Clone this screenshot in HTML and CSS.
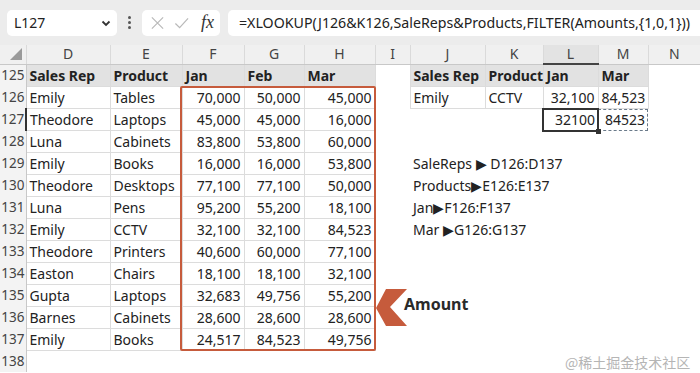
FILE: index.html
```html
<!DOCTYPE html>
<html lang="en">
<head>
  <meta charset="UTF-8">
  <title>XLOOKUP with FILTER</title>
  <link rel="stylesheet" href="styles.css">
</head>
<body>
  <div class="toolbar">
    <div class="namebox">
      <span>L127</span>
      <svg class="caret" width="10" height="7" viewBox="0 0 10 7"><path d="M1.5 1.5 L5 5 L8.5 1.5" fill="none" stroke="#333" stroke-width="1.8"/></svg>
    </div>
    <div class="dots"><i></i><i></i><i></i></div>
    <div class="fxbox">
      <svg width="16" height="16" viewBox="0 0 16 16"><path d="M2 2 L14 14 M14 2 L2 14" stroke="#b9b9b9" stroke-width="1.3"/></svg>
      <svg width="16" height="16" viewBox="0 0 16 16"><path d="M1.5 8.5 L6 13 L15 3" fill="none" stroke="#b9b9b9" stroke-width="1.3"/></svg>
      <span class="fx">fx</span>
    </div>
    <div class="formula">=XLOOKUP(J126&amp;K126,SaleReps&amp;Products,FILTER(Amounts,{1,0,1}))</div>
  </div>

  <div class="sheet">
    <table class="grid">
      <colgroup>
        <col style="width:26px"><col style="width:84px"><col style="width:72px"><col style="width:62px">
        <col style="width:60px"><col style="width:71px"><col style="width:35px"><col style="width:75px">
        <col style="width:58px"><col style="width:55px"><col style="width:50px"><col style="width:52px">
      </colgroup>
      <tr class="colhead">
        <td class="corner"><svg width="12" height="12" viewBox="0 0 12 12"><path d="M12 0 L12 12 L0 12 Z" fill="#9a9a9a"/></svg></td>
        <td>D</td><td>E</td><td>F</td><td>G</td><td>H</td><td>I</td><td>J</td><td>K</td><td class="active">L</td><td>M</td><td>N</td>
      </tr>
      <tr>
        <td class="rn">125</td>
        <td class="b th">Sales Rep</td><td class="b th">Product</td><td class="b th">Jan</td><td class="b th">Feb</td><td class="b th">Mar</td>
        <td></td>
        <td class="b th">Sales Rep</td><td class="b th">Product</td><td class="b th">Jan</td><td class="b th">Mar</td><td></td>
      </tr>
      <tr>
        <td class="rn">126</td>
        <td class="b">Emily</td><td class="b">Tables</td><td class="b n">70,000</td><td class="b n">50,000</td><td class="b n">45,000</td>
        <td></td>
        <td class="b">Emily</td><td class="b">CCTV</td><td class="b n">32,100</td><td class="b n">84,523</td><td></td>
      </tr>
      <tr>
        <td class="rn sel">127</td>
        <td class="b">Theodore</td><td class="b">Laptops</td><td class="b n">45,000</td><td class="b n">45,000</td><td class="b n">16,000</td>
        <td></td><td></td><td></td>
        <td class="n cur">32100<span class="handle"></span></td><td class="n spill">84523</td><td></td>
      </tr>
      <tr>
        <td class="rn">128</td>
        <td class="b">Luna</td><td class="b">Cabinets</td><td class="b n">83,800</td><td class="b n">53,800</td><td class="b n">60,000</td>
        <td></td><td></td><td></td><td></td><td></td><td></td>
      </tr>
      <tr>
        <td class="rn">129</td>
        <td class="b">Emily</td><td class="b">Books</td><td class="b n">16,000</td><td class="b n">16,000</td><td class="b n">53,800</td>
        <td></td><td class="note">SaleReps ▶ D126:D137</td><td></td><td></td><td></td><td></td>
      </tr>
      <tr>
        <td class="rn">130</td>
        <td class="b">Theodore</td><td class="b">Desktops</td><td class="b n">77,100</td><td class="b n">77,100</td><td class="b n">50,000</td>
        <td></td><td class="note">Products▶E126:E137</td><td></td><td></td><td></td><td></td>
      </tr>
      <tr>
        <td class="rn">131</td>
        <td class="b">Luna</td><td class="b">Pens</td><td class="b n">95,200</td><td class="b n">55,200</td><td class="b n">18,100</td>
        <td></td><td class="note">Jan▶F126:F137</td><td></td><td></td><td></td><td></td>
      </tr>
      <tr>
        <td class="rn">132</td>
        <td class="b">Emily</td><td class="b">CCTV</td><td class="b n">32,100</td><td class="b n">32,100</td><td class="b n">84,523</td>
        <td></td><td class="note">Mar ▶G126:G137</td><td></td><td></td><td></td><td></td>
      </tr>
      <tr>
        <td class="rn">133</td>
        <td class="b">Theodore</td><td class="b">Printers</td><td class="b n">40,600</td><td class="b n">60,000</td><td class="b n">77,100</td>
        <td></td><td></td><td></td><td></td><td></td><td></td>
      </tr>
      <tr>
        <td class="rn">134</td>
        <td class="b">Easton</td><td class="b">Chairs</td><td class="b n">18,100</td><td class="b n">18,100</td><td class="b n">32,100</td>
        <td></td><td></td><td></td><td></td><td></td><td></td>
      </tr>
      <tr>
        <td class="rn">135</td>
        <td class="b">Gupta</td><td class="b">Laptops</td><td class="b n">32,683</td><td class="b n">49,756</td><td class="b n">55,200</td>
        <td></td><td></td><td></td><td></td><td></td><td></td>
      </tr>
      <tr>
        <td class="rn">136</td>
        <td class="b">Barnes</td><td class="b">Cabinets</td><td class="b n">28,600</td><td class="b n">28,600</td><td class="b n">28,600</td>
        <td></td><td></td><td></td><td></td><td></td><td></td>
      </tr>
      <tr>
        <td class="rn">137</td>
        <td class="b">Emily</td><td class="b">Books</td><td class="b n">24,517</td><td class="b n">84,523</td><td class="b n">49,756</td>
        <td></td><td></td><td></td><td></td><td></td><td></td>
      </tr>
      <tr>
        <td class="rn">138</td>
        <td></td><td></td><td></td><td></td><td></td><td></td><td></td><td></td><td></td><td></td><td></td>
      </tr>
    </table>

    <!-- callout over the amounts range -->
    <div class="amounts-box"></div>
    <svg class="chevron" width="32" height="38" viewBox="0 0 32 38"><path d="M10 0 L31 0 L14 18 L31 37 L10 37 L0 19 Z" fill="#c65b3c"/></svg>
    <div class="amount-label">Amount</div>
    <div class="watermark">@稀土掘金技术社区</div>
  </div>
</body>
</html>
```

FILE: styles.css
```css
body {
  margin: 0;
  width: 700px;
  height: 373px;
  overflow: hidden;
  background: #fff;
  font-family: "Noto Sans", "Open Sans", sans-serif;
  color: #222;
}
.toolbar {
  height: 45px;
  background: #ececec;
  display: flex;
  align-items: center;
  padding: 0 0 0 7px;
  gap: 8px;
  box-sizing: border-box;
}
.namebox {
  width: 110px;
  height: 26px;
  background: #fff;
  border-radius: 5px;
  display: flex;
  align-items: center;
  justify-content: space-between;
  padding: 0 6px 0 7px;
  box-sizing: border-box;
  font-size: 14px;
}
.caret {
  margin-top: 2px;
}
.dots {
  display: flex;
  flex-direction: column;
  gap: 2px;
  padding: 0 3px;
}
.dots i {
  width: 3px;
  height: 3px;
  background: #555;
  border-radius: 50%;
}
.fxbox {
  width: 78px;
  height: 26px;
  background: #fff;
  border-radius: 5px;
  display: flex;
  align-items: center;
  gap: 9px;
  padding: 0 6px 0 8px;
  box-sizing: border-box;
}
.fx {
  font-family: "Liberation Serif", serif;
  font-style: italic;
  font-size: 18px;
  color: #333;
  margin-left: 3px;
}
.formula {
  flex: 1;
  height: 26px;
  background: #fff;
  border-radius: 5px 0 0 5px;
  display: flex;
  align-items: center;
  padding-left: 11px;
  font-size: 14.2px;
  white-space: nowrap;
  overflow: hidden;
}
.sheet {
  position: relative;
}
.grid {
  border-collapse: collapse;
  table-layout: fixed;
  width: 700px;
  font-size: 14px;
}
.grid td {
  height: 21px;
  padding: 0 3px;
  white-space: nowrap;
  overflow: visible;
  line-height: 21px;
  box-sizing: border-box;
}
.colhead td {
  height: 19px;
  line-height: 18px;
  background: #f0f0f0;
  color: #444;
  text-align: center;
  border-left: 1px solid #dadada;
  border-bottom: 1px solid #c8c8c8;
  font-size: 14px;
}
.colhead td.corner {
  border-left: none;
  text-align: right;
  padding: 0 4px 0 0;
  vertical-align: bottom;
}
.colhead td.active {
  background: #e3e3e3;
  border-bottom: 2px solid #444;
}
.rn {
  background: #f3f3f3;
  color: #444;
  text-align: right;
  border-right: 1px solid #c8c8c8;
  padding: 0 1px !important;
  font-size: 13.5px;
}
.rn.sel {
  border-right: 2px solid #333;
}
.b {
  border: 1px solid #dcdcdc;
}
.th {
  background: #e2e2e2;
  font-weight: bold;
}
.n {
  text-align: right;
}
.cur {
  position: relative;
  outline: 2px solid #333;
  outline-offset: -1px;
}
.handle {
  position: absolute;
  right: -3px;
  bottom: -3px;
  width: 5px;
  height: 5px;
  background: #333;
}
.spill {
  outline: 1px dashed #6a7a8a;
  outline-offset: -1px;
}
.note {
  font-size: 14px;
}
.amounts-box {
  position: absolute;
  left: 180px;
  top: 41px;
  width: 196px;
  height: 265px;
  border: 2px solid #c65b3c;
  border-radius: 2px;
  box-sizing: border-box;
}
.chevron {
  position: absolute;
  left: 376px;
  top: 244px;
}
.amount-label {
  position: absolute;
  left: 404px;
  top: 248px;
  font-size: 16px;
  font-weight: bold;
  color: #2a2a2a;
}
.watermark {
  position: absolute;
  left: 565px;
  top: 307px;
  font-family: "Noto Sans CJK SC", sans-serif;
  font-size: 14px;
  color: #b5b5b5;
}
```
